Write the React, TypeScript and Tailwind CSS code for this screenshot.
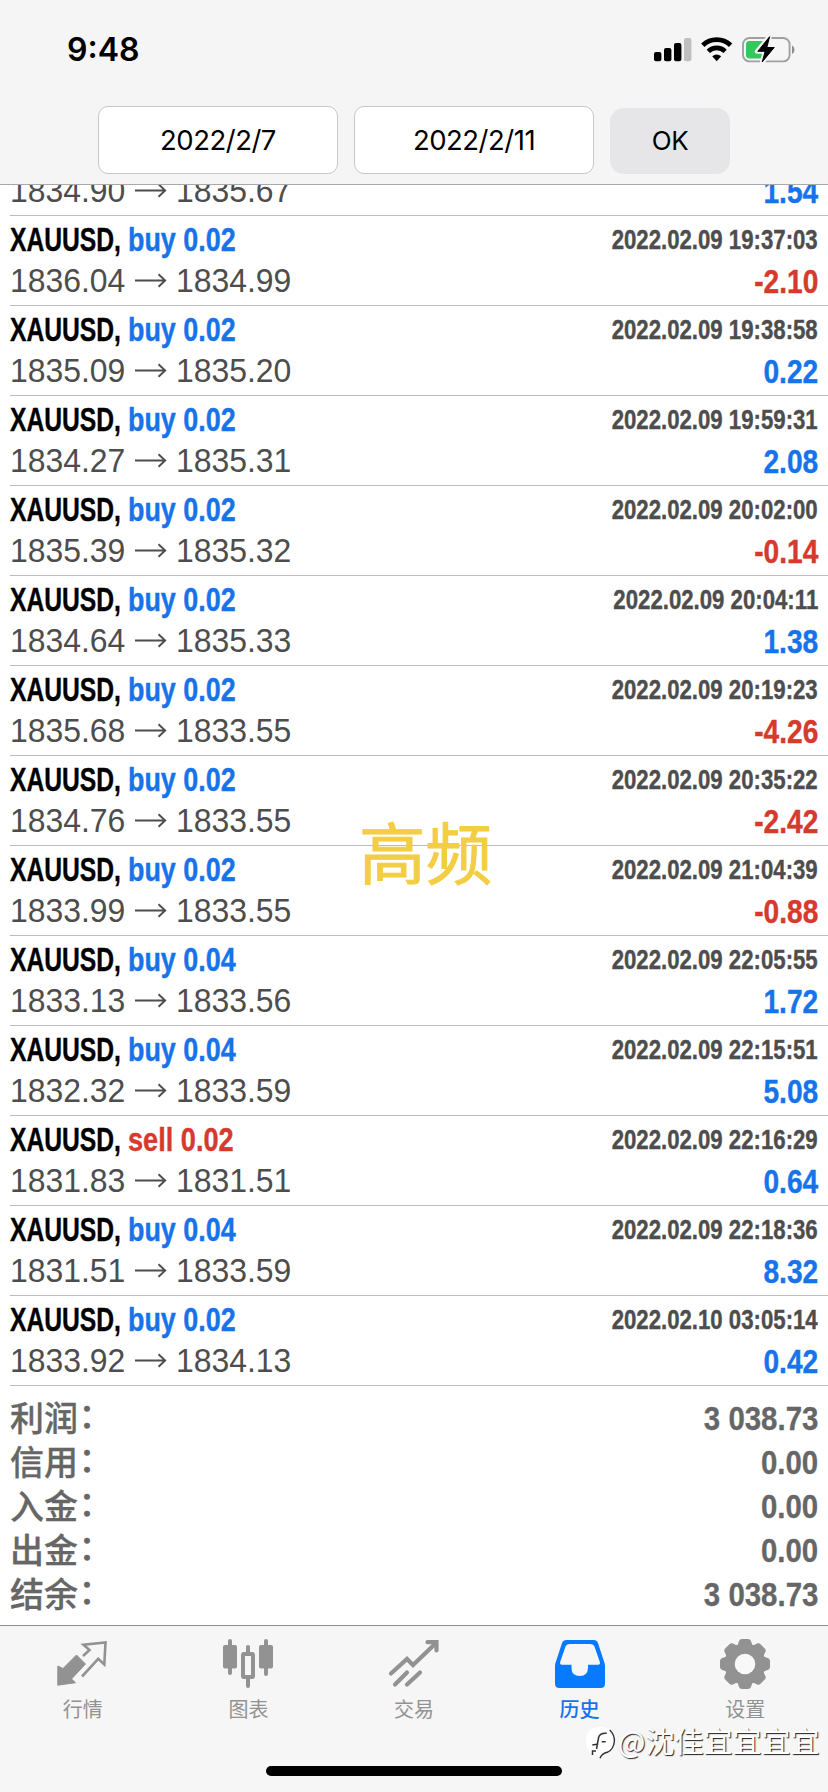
import React from "react";

type Trade = {
  side: "buy" | "sell";
  lots: string;
  open: string;
  close: string;
  time: string;
  profit: string;
};

const trades: Trade[] = [
  { side: "buy", lots: "0.02", open: "1836.04", close: "1834.99", time: "2022.02.09 19:37:03", profit: "-2.10" },
  { side: "buy", lots: "0.02", open: "1835.09", close: "1835.20", time: "2022.02.09 19:38:58", profit: "0.22" },
  { side: "buy", lots: "0.02", open: "1834.27", close: "1835.31", time: "2022.02.09 19:59:31", profit: "2.08" },
  { side: "buy", lots: "0.02", open: "1835.39", close: "1835.32", time: "2022.02.09 20:02:00", profit: "-0.14" },
  { side: "buy", lots: "0.02", open: "1834.64", close: "1835.33", time: "2022.02.09 20:04:11", profit: "1.38" },
  { side: "buy", lots: "0.02", open: "1835.68", close: "1833.55", time: "2022.02.09 20:19:23", profit: "-4.26" },
  { side: "buy", lots: "0.02", open: "1834.76", close: "1833.55", time: "2022.02.09 20:35:22", profit: "-2.42" },
  { side: "buy", lots: "0.02", open: "1833.99", close: "1833.55", time: "2022.02.09 21:04:39", profit: "-0.88" },
  { side: "buy", lots: "0.04", open: "1833.13", close: "1833.56", time: "2022.02.09 22:05:55", profit: "1.72" },
  { side: "buy", lots: "0.04", open: "1832.32", close: "1833.59", time: "2022.02.09 22:15:51", profit: "5.08" },
  { side: "sell", lots: "0.02", open: "1831.83", close: "1831.51", time: "2022.02.09 22:16:29", profit: "0.64" },
  { side: "buy", lots: "0.04", open: "1831.51", close: "1833.59", time: "2022.02.09 22:18:36", profit: "8.32" },
  { side: "buy", lots: "0.02", open: "1833.92", close: "1834.13", time: "2022.02.10 03:05:14", profit: "0.42" },
];

const totals = [
  { label: "利润", value: "3 038.73" },
  { label: "信用", value: "0.00" },
  { label: "入金", value: "0.00" },
  { label: "出金", value: "0.00" },
  { label: "结余", value: "3 038.73" },
];

function StatusBar() {
  return (
    <div className="flex h-[100px] items-start justify-between pl-[67px] pr-[33px]">
      <span className="mt-[30px] text-[32px] font-semibold leading-[40px] text-black">9:48</span>
      <svg className="mt-[34px]" width="142" height="32" viewBox="652 34 142 32">
        <rect x="653" y="52" width="7.4" height="9.2" rx="2" fill="#000" />
        <rect x="663" y="48" width="7.4" height="13.2" rx="2" fill="#000" />
        <rect x="673" y="43" width="7.4" height="18.2" rx="2" fill="#000" />
        <rect x="683" y="38" width="7.4" height="23.2" rx="2" fill="#bfbfbf" />
        <path d="M701.8 45.3 A20 20 0 0 1 729.6 45.3" fill="none" stroke="#000" strokeWidth="4.8" />
        <path d="M707.3 51.3 A12 12 0 0 1 724.1 51.3" fill="none" stroke="#000" strokeWidth="4.6" />
        <path d="M711.2 56.2 Q715.7 52.9 720.2 56.2 L715.7 61.2 Z" fill="#000" />
        <rect x="742" y="38" width="46.6" height="23.4" rx="6.5" fill="none" stroke="#a0a0a0" strokeWidth="1.9" />
        <path d="M791 45.4 A5 5 0 0 1 791 54 Z" fill="#8e8e8e" />
        <path d="M748.5 41 H764 V58.4 H748.5 Q745 58.4 745 55 V44.4 Q745 41 748.5 41 Z" fill="#34c759" />
        <path d="M768.6 36 L756 51.5 H763.8 L760.8 63 L773.8 47.2 H766.2 Z" fill="#000" stroke="#f5f5f6" strokeWidth="4.4" strokeLinejoin="round" />
        <path d="M768.6 36.7 L756.8 51.3 H764.2 L761.2 62 L773.2 47.5 H765.8 Z" fill="#000" stroke="#000" strokeWidth="1" strokeLinejoin="round" />
      </svg>
    </div>
  );
}

function DateField({ value }: { value: string }) {
  return (
    <div className="flex h-[68px] w-[240px] items-center justify-center rounded-[10px] border border-[#c8c8ca] bg-white pt-[2px] text-[27.5px] leading-none tracking-[-0.5px] text-black">
      {value}
    </div>
  );
}

function PriceLine({ open, close }: { open: string; close: string }) {
  return (
    <div className="flex h-full items-center text-[32.5px] leading-[36px] text-[#4d4d4d]">
      <span className="w-[125px] origin-left scale-x-[0.982]">{open}</span>
      <svg width="32" height="16" viewBox="0 0 32 16" fill="none" stroke="#4d4d4d" strokeWidth="1.9">
        <path d="M0 7.5 H30 M23.5 1.2 L30.2 7.5 L23.5 13.8" />
      </svg>
      <span className="ml-[9px] origin-left scale-x-[0.982]">{close}</span>
    </div>
  );
}

function Profit({ value }: { value: string }) {
  return (
    <span
      className={
        value.startsWith("-")
          ? "origin-right scale-x-[0.84] text-[33.5px] font-bold leading-[37px] text-[#d63a2c] [-webkit-text-stroke:0.4px]"
          : "origin-right scale-x-[0.84] text-[33.5px] font-bold leading-[37px] text-[#1673ea] [-webkit-text-stroke:0.4px]"
      }
    >
      {value}
    </span>
  );
}

function TradeRow({ trade }: { trade: Trade }) {
  return (
    <div className="ml-[10px] h-[90px] shrink-0 border-b border-[#bcbcbe] pr-[10px] pt-px">
      <div className="flex h-[46px] items-center justify-between font-bold [-webkit-text-stroke:0.4px]">
        <div className="flex text-[33px] leading-[46px]">
          <span className="w-[118px] origin-left scale-x-[0.747] whitespace-nowrap text-black">XAUUSD,</span>
          <span
            className={
              trade.side === "buy"
                ? "origin-left scale-x-[0.815] whitespace-nowrap text-[#1673ea]"
                : "origin-left scale-x-[0.823] whitespace-nowrap text-[#d63a2c]"
            }
          >
            {trade.side} {trade.lots}
          </span>
        </div>
        <span className="origin-right scale-x-[0.822] whitespace-nowrap text-[27px] leading-[46px] text-[#4d4d4d]">
          {trade.time}
        </span>
      </div>
      <div className="flex h-[36px] justify-between">
        <PriceLine open={trade.open} close={trade.close} />
        <Profit value={trade.profit} />
      </div>
    </div>
  );
}

function QuotesIcon() {
  return (
    <svg width="52" height="52" viewBox="0 0 52 52">
      <path d="M0.8 28 L6 30.5 L19.5 17 L28.5 26 L14.5 41 L18.5 44.7 L0.8 47.2 Z" fill="#929292" stroke="#929292" strokeWidth="1" strokeLinejoin="round" />
      <path d="M26 18 L32.5 12 L26.5 6.8 L48.5 4.4 L47.3 26.5 L41.2 20.8 L25 38.5" fill="none" stroke="#929292" strokeWidth="2.6" />
    </svg>
  );
}

function ChartIcon() {
  return (
    <svg width="52" height="52" viewBox="0 0 52 52" fill="#929292">
      <rect x="6" y="1" width="4" height="36" rx="2" />
      <rect x="1" y="7" width="14" height="23.5" rx="2" />
      <rect x="42" y="1" width="4" height="37" rx="2" />
      <rect x="37" y="7" width="14" height="23.5" rx="2" />
      <rect x="24" y="7" width="4" height="43" rx="2" />
      <rect x="21" y="16" width="10" height="23" rx="1" fill="#f6f6f6" stroke="#929292" strokeWidth="4" />
    </svg>
  );
}

function TradeIcon() {
  return (
    <svg width="52" height="52" viewBox="0 0 52 52" fill="none" stroke="#929292" strokeWidth="4.2" strokeLinecap="round">
      <path d="M3 35.5 L19 21 L25 27 L47.5 5.5" strokeLinejoin="miter" />
      <path d="M39.5 4.2 H48.5 V12.5" />
      <path d="M7 46.5 L19 34.5 M19 46.5 L32 34.5" />
    </svg>
  );
}

function HistoryIcon() {
  return (
    <svg width="52" height="52" viewBox="0 0 52 52">
      <path d="M12.5 2 H39.5 Q43 2 44 5 L50.2 24 Q51 26 51 28 V45.5 Q51 50 46.5 50 H5.5 Q1 50 1 45.5 V28 Q1 26 1.8 24 L8 5 Q9 2 12.5 2 Z" fill="#087aff" />
      <path d="M15.5 6 H36.5 Q39.6 6 40.5 8.5 L45.8 24 Q46.5 26.8 44 26.8 H34 V30 Q33.5 38 26 38 Q17.5 38 17.5 30 V26.8 H8 Q5.5 26.8 6.2 24 L11.5 8.5 Q12.4 6 15.5 6 Z" fill="#f6f6f6" />
    </svg>
  );
}

function SettingsIcon() {
  return (
    <svg width="52" height="52" viewBox="-26 -26 52 52">
      <g fill="#929292">
        <circle r="20" />
        {[0, 45, 90, 135, 180, 225, 270, 315].map((angle) => (
          <path
            key={angle}
            transform={`rotate(${angle})`}
            d="M-9 -18 Q-7.2 -18.6 -6.6 -21 Q-5.8 -25 -3 -25 H3 Q5.8 -25 6.6 -21 Q7.2 -18.6 9 -18 Z"
          />
        ))}
      </g>
      <circle r="10.3" fill="#f8f8f8" />
    </svg>
  );
}

const tabs = [
  { label: "行情", icon: QuotesIcon, active: false },
  { label: "图表", icon: ChartIcon, active: false },
  { label: "交易", icon: TradeIcon, active: false },
  { label: "历史", icon: HistoryIcon, active: true },
  { label: "设置", icon: SettingsIcon, active: false },
];

export default function App() {
  return (
    <div className="relative flex h-[1792px] w-[828px] flex-col overflow-hidden bg-white font-['Liberation_Sans','Noto_Sans_CJK_SC',sans-serif]">
      <header className="flex h-[185px] shrink-0 flex-col border-b border-[#a9a9ab] bg-[#f5f5f6] font-['Inter','Noto_Sans_CJK_SC',sans-serif]">
        <StatusBar />
        <div className="flex gap-4 pl-[98px] pt-[6px]">
          <DateField value="2022/2/7" />
          <DateField value="2022/2/11" />
          <button className="mt-[2px] flex h-[66px] w-[120px] items-center justify-center rounded-[14px] bg-[#e6e6e8] text-[26px] leading-none tracking-[-0.5px] text-black">
            OK
          </button>
        </div>
      </header>

      <main className="flex flex-1 flex-col">
        <div className="ml-[10px] flex h-[31px] shrink-0 flex-col justify-end overflow-hidden border-b border-[#bcbcbe] pb-[6px] pr-[10px]">
          <div className="flex h-[36px] shrink-0 justify-between">
            <PriceLine open="1834.90" close="1835.67" />
            <Profit value="1.54" />
          </div>
        </div>
        {trades.map((trade) => (
          <TradeRow key={trade.time} trade={trade} />
        ))}
        <section className="flex flex-col pl-[10px] pr-[10px] pt-[10px] font-bold text-[#666666]">
          {totals.map((row) => (
            <div key={row.label} className="flex h-[44px] items-center justify-between">
              <span className="flex items-center pb-[2px] font-['Noto_Sans_CJK_SC',sans-serif] text-[34px] font-medium leading-[42px] [-webkit-text-stroke:0.3px]">
                {row.label}
                <span className="ml-[-8px] pb-[2px] font-['Noto_Sans_CJK_TC',sans-serif] leading-[40px]" lang="zh-Hant">
                  ：
                </span>
              </span>
              <span className="mt-[1px] origin-right scale-x-[0.865] text-[34px] leading-[43px] [-webkit-text-stroke:0.3px]">
                {row.value}
              </span>
            </div>
          ))}
        </section>
      </main>

      <nav className="flex h-[167px] shrink-0 flex-col items-center justify-between border-t-[1px] border-[#8f8f8f] bg-[#f6f6f6] pb-[16px]">
        <div className="grid w-full grid-cols-5 pt-[12px]">
          {tabs.map(({ label, icon: Icon, active }) => (
            <div key={label} className="flex flex-col items-center">
              <Icon />
              <span
                className={
                  active
                    ? "mt-[4px] font-['Noto_Sans_CJK_SC',sans-serif] text-[20px] font-medium leading-[30px] text-[#1673ea]"
                    : "mt-[4px] font-['Noto_Sans_CJK_SC',sans-serif] text-[20px] leading-[30px] text-[#929292]"
                }
              >
                {label}
              </span>
            </div>
          ))}
        </div>
        <div className="h-[10px] w-[296px] rounded-full bg-black" />
      </nav>

      <div className="absolute left-[359px] top-[810px] font-['Noto_Sans_CJK_SC',sans-serif] text-[66.5px] leading-[80px] text-[#f3cd43] [-webkit-text-stroke:1px]">
        高频
      </div>

      <div className="absolute left-[584px] top-[1722px] flex items-center">
        <svg width="34" height="38" viewBox="0 0 34 38" fill="none">
          <path d="M16 5 Q31 5 31 19 Q31 29 20 34 L16 36 L16 33 Q2 33 2 19 Q2 5 16 5 Z" fill="#fff" />
          <path d="M25.7 8 Q31 13 30.3 20 Q29.5 27 24 30 Q17.5 31.500 16 36.300" stroke="#333" strokeWidth="1.4" />
          <path d="M22.700 11.300 Q15.500 10.800 14.500 16 L12.500 27 M8.500 33 V29 H12 M8.300 23 L14.300 22 M17.700 19.700 H21.700" stroke="#333" strokeWidth="1.5" />
        </svg>
        <span className="-mt-[2px] whitespace-nowrap font-['Noto_Sans_CJK_SC',sans-serif] text-[29px] leading-[36px] text-white [text-shadow:1px_1px_1px_#222]">
          @沈佳宜宜宜宜
        </span>
      </div>
    </div>
  );
}
